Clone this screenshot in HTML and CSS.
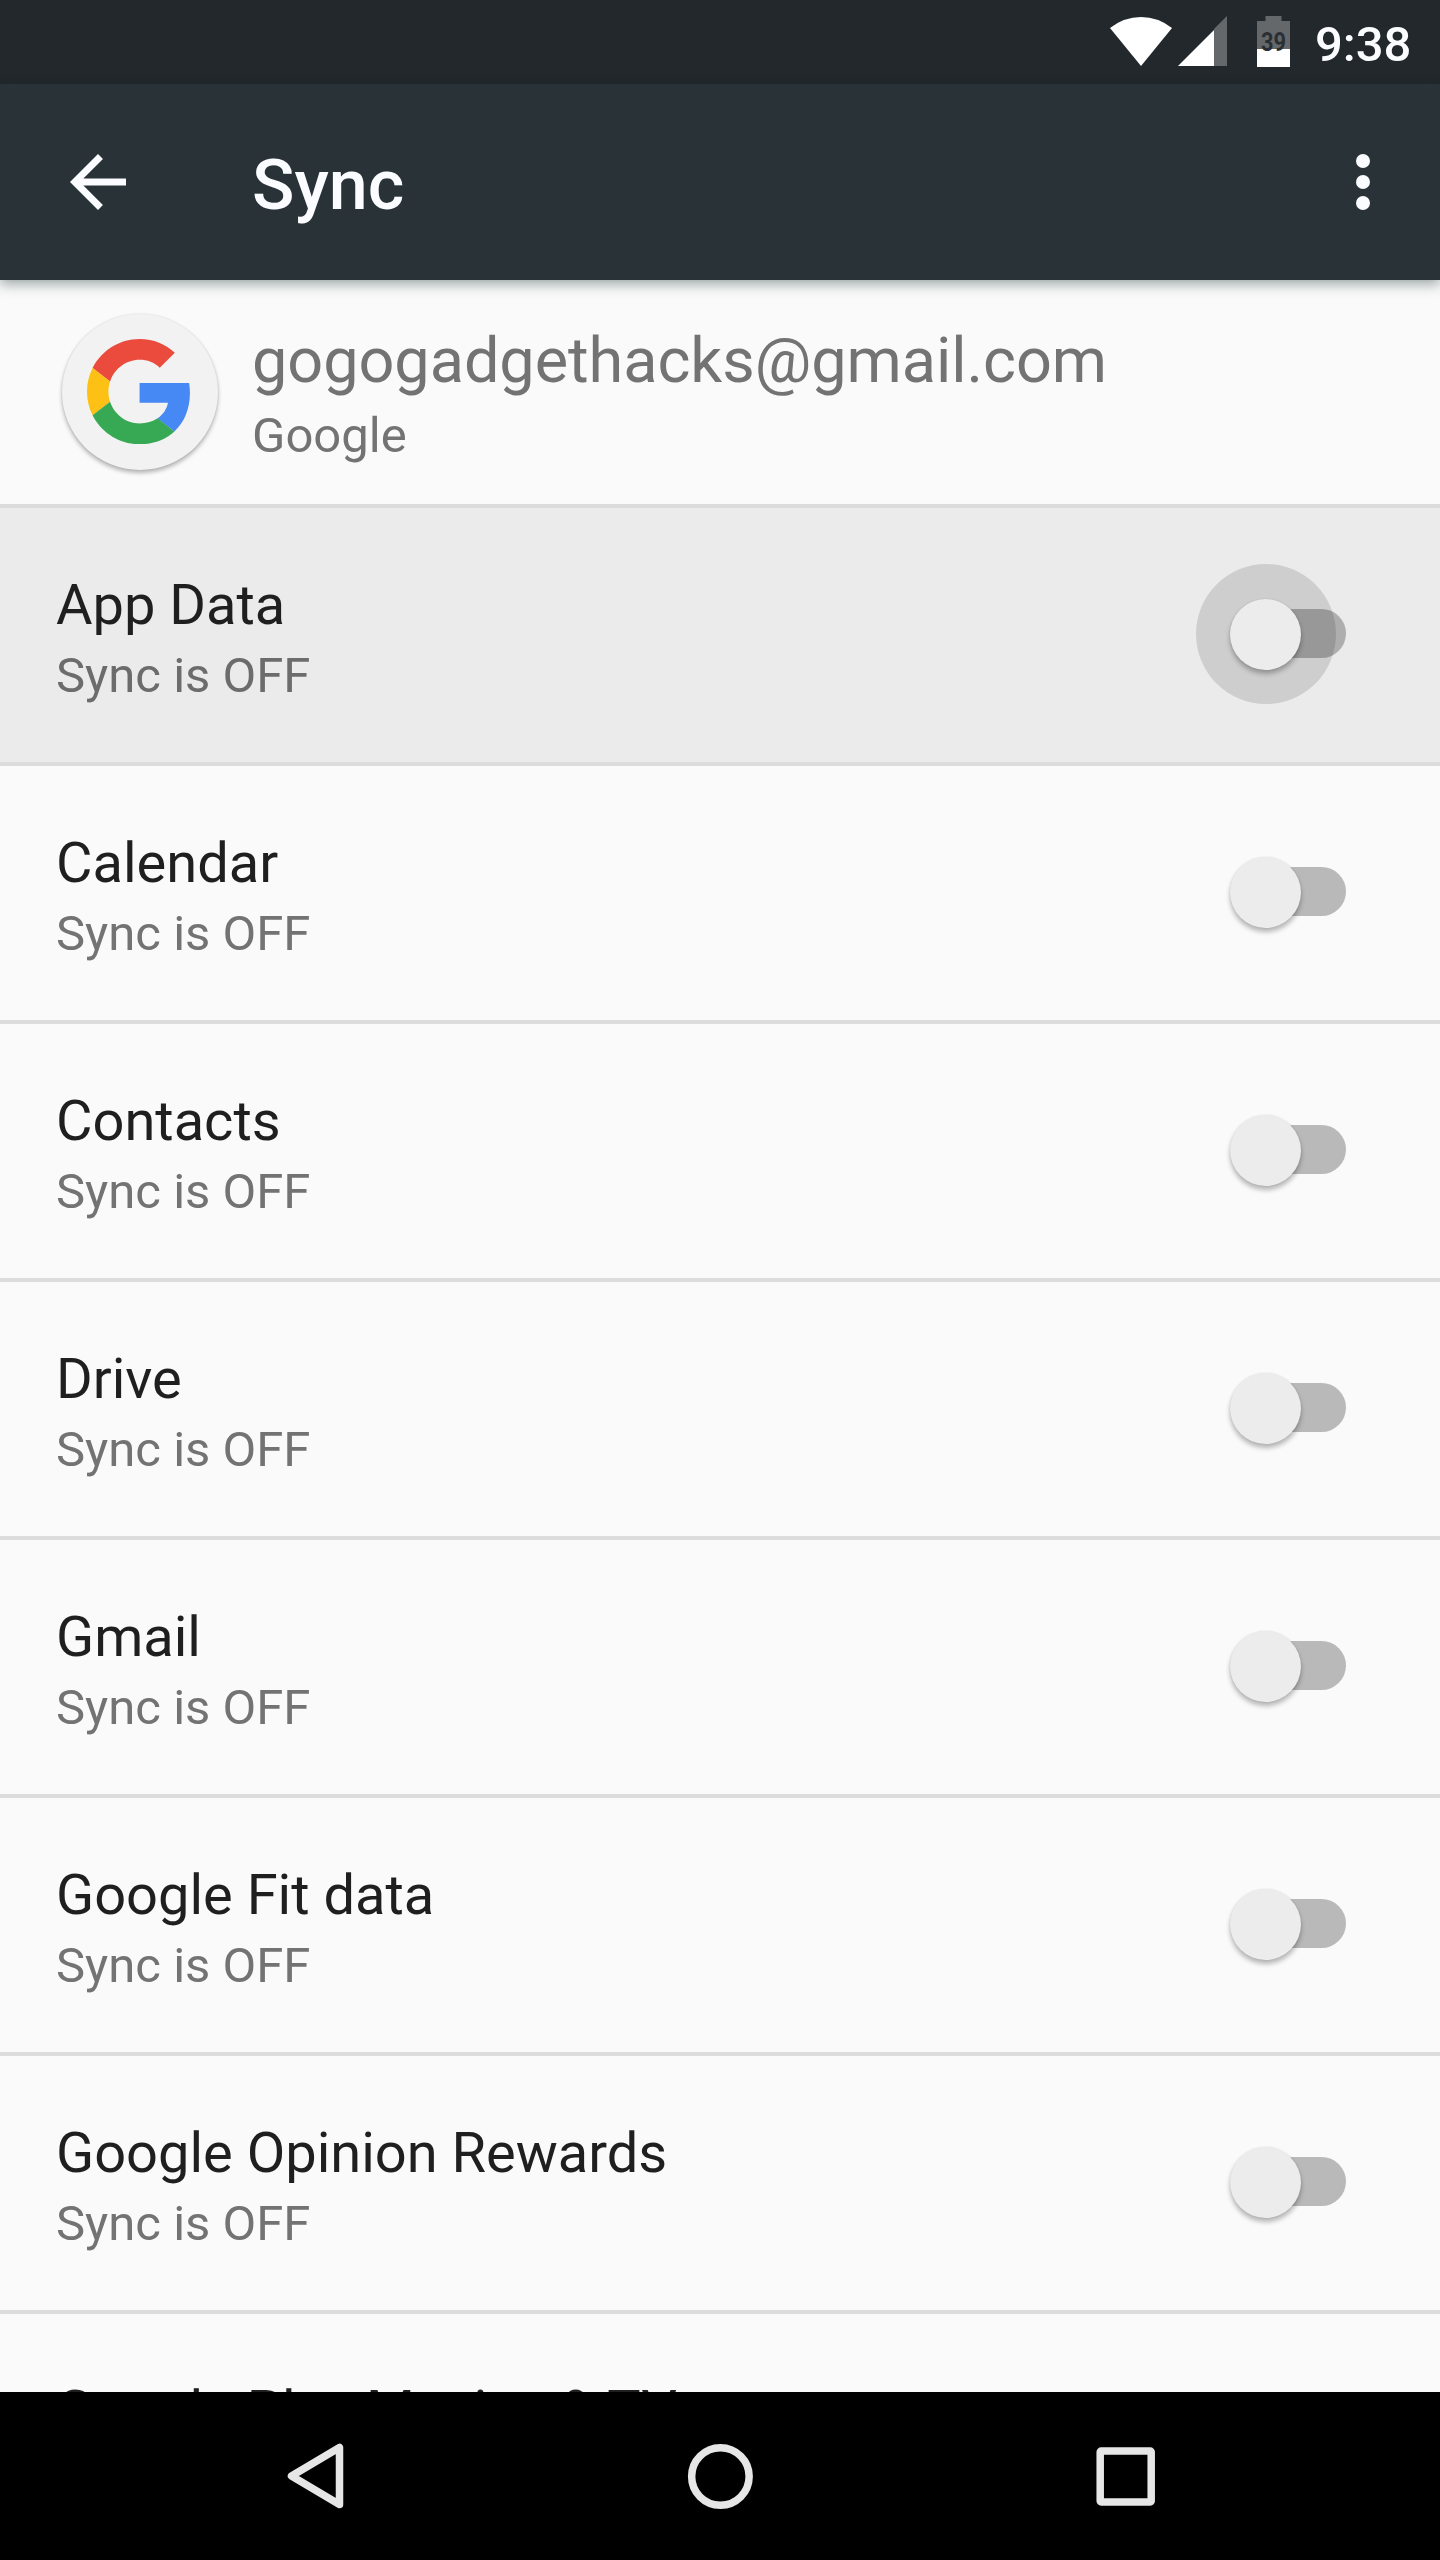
FILE: index.html
```html
<!DOCTYPE html>
<html lang="en">
<head>
<meta charset="utf-8">
<title>Sync</title>
<link rel="stylesheet" href="styles.css">
</head>
<body>
<div class="screen">
  <div class="statusbar">
    <svg class="wifi" width="62" height="50" viewBox="0 0 62 50"><path d="M31 50L0 12Q14 1 31 1T62 12Z" fill="#fff"/></svg>
    <svg class="signal" width="49" height="50" viewBox="0 0 49 50"><path d="M36 13L49 0V50H36Z" fill="#64686b"/><path d="M0 50L36 14V50Z" fill="#fff"/></svg>
    <svg class="battery" width="33" height="51" viewBox="0 0 33 51"><path d="M8.500 0H24.500V5H33V33H0V5H8.500Z" fill="#64686b"/><path d="M0 33H33V51H0Z" fill="#fff"/><text x="4" y="34.500" textLength="25" lengthAdjust="spacingAndGlyphs" class="level">39</text></svg>
    <span class="clock">9:38</span>
  </div>
  <header class="toolbar">
    <svg class="back" width="84" height="84" viewBox="0 0 24 24"><path d="M20 11H7.830l5.590-5.590L12 4l-8 8 8 8 1.410-1.410L7.830 13H20v-2z" fill="#fafcff"/></svg>
    <h1 class="title">Sync</h1>
    <svg class="more" width="84" height="84" viewBox="0 0 24 24" fill="#fafcff"><circle cx="12" cy="6" r="2"/><circle cx="12" cy="12" r="2"/><circle cx="12" cy="18" r="2"/></svg>
  </header>
  <main class="content">
    <section class="account">
      <div class="avatar">
        <svg width="103" height="105.300" viewBox="0 0 47 48">
          <path fill="#ea4b3c" d="M24 9.500c3.540 0 6.710 1.220 9.210 3.600l6.850-6.850C35.900 2.380 30.470 0 24 0 14.620 0 6.510 5.380 2.560 13.220l7.980 6.190C12.430 13.720 17.740 9.500 24 9.500z"/>
          <path fill="#4688f4" d="M46.980 24.550c0-1.570-.15-3.090-.38-4.550H24v9.020h12.940c-.58 2.960-2.260 5.480-4.780 7.180l7.730 6c4.510-4.180 7.090-10.360 7.090-17.650z"/>
          <path fill="#fcc114" d="M10.530 28.590c-.48-1.450-.76-2.990-.76-4.590s.27-3.140.76-4.590l-7.980-6.190C.92 16.460 0 20.120 0 24c0 3.880.92 7.540 2.560 10.780l7.970-6.190z"/>
          <path fill="#37a853" d="M24 48c6.480 0 11.930-2.130 15.890-5.810l-7.730-6c-2.150 1.450-4.920 2.300-8.160 2.300-6.260 0-11.570-4.220-13.470-9.910l-7.980 6.190C6.510 42.620 14.620 48 24 48z"/>
        </svg>
      </div>
      <div class="identity">
        <div class="email">gogogadgethacks@gmail.com</div>
        <div class="summary">Google</div>
      </div>
    </section>
    <section class="row pressed"><div class="label"><div class="name">App Data</div><div class="summary">Sync is OFF</div></div><div class="switch"><span class="track"></span><span class="ripple"></span><span class="thumb"></span></div></section>
    <section class="row"><div class="label"><div class="name">Calendar</div><div class="summary">Sync is OFF</div></div><div class="switch"><span class="track"></span><span class="thumb"></span></div></section>
    <section class="row"><div class="label"><div class="name">Contacts</div><div class="summary">Sync is OFF</div></div><div class="switch"><span class="track"></span><span class="thumb"></span></div></section>
    <section class="row"><div class="label"><div class="name">Drive</div><div class="summary">Sync is OFF</div></div><div class="switch"><span class="track"></span><span class="thumb"></span></div></section>
    <section class="row"><div class="label"><div class="name">Gmail</div><div class="summary">Sync is OFF</div></div><div class="switch"><span class="track"></span><span class="thumb"></span></div></section>
    <section class="row"><div class="label"><div class="name">Google Fit data</div><div class="summary">Sync is OFF</div></div><div class="switch"><span class="track"></span><span class="thumb"></span></div></section>
    <section class="row"><div class="label"><div class="name">Google Opinion Rewards</div><div class="summary">Sync is OFF</div></div><div class="switch"><span class="track"></span><span class="thumb"></span></div></section>
    <section class="row"><div class="label"><div class="name">Google Play Movies &amp; TV</div></div></section>
  </main>
  <nav class="navbar">
    <svg width="72" height="72" viewBox="0 0 72 72"><path d="M60.500 7.500V64.500L12.500 36Z"/></svg>
    <svg width="72" height="72" viewBox="0 0 72 72"><circle cx="36.400" cy="36.500" r="28.750"/></svg>
    <svg width="72" height="72" viewBox="0 0 72 72"><rect x="11.200" y="11" width="51" height="51" rx="1"/></svg>
  </nav>
</div>
</body>
</html>
```
FILE: styles.css
```css
* { box-sizing: border-box; }
body { margin: 0; font-family: Roboto, sans-serif; background: #fafafa; }
svg { display: block; flex: none; }
.screen { width: 1440px; height: 2560px; display: flex; flex-direction: column; overflow: hidden; }

.statusbar { flex: none; height: 84px; padding: 16px 29px 0 0; display: flex; justify-content: flex-end; align-items: flex-start; background: #22282c; }
.signal { margin-left: 6px; }
.battery { margin-left: 30px; }
.level { font: 700 26px Roboto, sans-serif; fill: #292f33; }
.clock { margin-left: 25px; width: 96px; font-size: 49px; font-weight: 500; line-height: 57px; color: #fafcff; white-space: nowrap; }

.toolbar { flex: none; height: 196px; padding: 0 35px 0 56px; display: flex; align-items: center; background: #283237; box-shadow: 0 4px 12px rgba(20, 40, 40, .42); position: relative; z-index: 1; }
.title { flex: 1; margin: 5px 0 0 112px; font-size: 70px; font-weight: 500; line-height: 82px; color: #fafcff; }

.content { flex: 1; min-height: 0; overflow: hidden; background: #fafafa; }
.account { height: 228px; padding: 33.500px 0 0 62px; display: flex; align-items: flex-start; border-bottom: 4px solid #dcdcdc; }
.avatar { width: 156px; height: 156px; padding-right: 2.500px; border-radius: 50%; background: #f2f2f2; display: flex; align-items: center; justify-content: center; box-shadow: 0 3px 4px rgba(0, 0, 0, .28), 0 0 2px rgba(0, 0, 0, .12); }
.identity { padding: 10.500px 0 0 34px; }
.email { font-size: 63px; line-height: 74px; letter-spacing: -.06px; color: #737373; margin-bottom: 9px; }
.summary { font-size: 49px; line-height: 57px; color: #737373; }

.row { height: 258px; padding: 0 94px 0 56px; display: flex; justify-content: space-between; border-bottom: 4px solid #dcdcdc; }
.pressed { background: #ebebeb; }
.pressed .summary { color: #6c6c6c; }
.label { padding-top: 64px; }
.name { font-size: 56px; line-height: 66px; color: #1f1f1f; margin-bottom: 9px; white-space: nowrap; }

.switch { position: relative; width: 116px; height: 71px; margin-top: 91px; }
.track { position: absolute; left: 24px; right: 0; top: 10px; height: 49px; border-radius: 25px; background: rgba(0, 0, 0, .26); }
.thumb { position: absolute; left: 0; top: 0; width: 71px; height: 71px; border-radius: 50%; background: #ececec; box-shadow: 0 4px 5px rgba(0, 0, 0, .28), 0 0 2px rgba(0, 0, 0, .1); }
.ripple { position: absolute; left: -34px; top: -35px; width: 140px; height: 140px; border-radius: 50%; background: rgba(0, 0, 0, .12); }

.navbar { flex: none; height: 168px; background: #000; display: flex; align-items: center; justify-content: center; gap: 333px; }
.navbar svg { fill: none; stroke: #e6e6e6; stroke-width: 7.500px; stroke-linejoin: round; }
```
